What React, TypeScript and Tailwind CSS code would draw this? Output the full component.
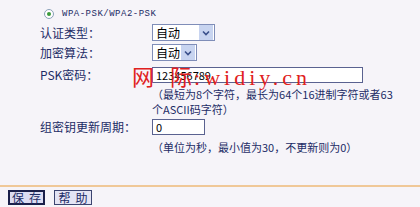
import React from 'react';

const font = { fontFamily: '"Noto Sans CJK SC", "Noto Sans", sans-serif' };

const Arrow = () => (
  <span className="flex h-[15px] w-[14px] items-center justify-center bg-[#c8d4f0]">
    <svg width="8" height="6" viewBox="0 0 8 6">
      <path d="M1 1.5 L4 4.5 L7 1.5" stroke="#3a4f8a" strokeWidth="1.6" fill="none" />
    </svg>
  </span>
);

const Select = ({ width }: { width: string }) => (
  <div className={`flex h-[17px] ${width} items-center justify-between border border-[#7f8db8] bg-white pl-[3px] pr-px`}>
    <span className="text-[12px] leading-none text-black">自动</span>
    <Arrow />
  </div>
);

const App = () => {
  return (
    <div className="relative h-[207px] w-[420px] overflow-hidden bg-[#f6f4f9] text-[#1d2c66]" style={font}>
      <div className="h-[185px] pl-[40px] pt-[9px]">
        {/* radio */}
        <div className="flex h-[10px] items-center gap-[8px] pl-[4px]">
          <span className="flex h-[10px] w-[10px] items-center justify-center rounded-full border border-[#8aa0b8] bg-white">
            <span className="h-[4px] w-[4px] rounded-full bg-[#3c9a3c]" />
          </span>
          <span className="text-[9px] leading-none tracking-[0.5px] text-[#1d2c66]" style={{ fontFamily: '"Liberation Mono", monospace' }}>
            WPA-PSK/WPA2-PSK
          </span>
        </div>

        <div className="mt-[5px] grid grid-cols-[112px_1fr] items-center gap-y-[3px] text-[12px] leading-[17px]">
          <span>认证类型：</span>
          <Select width="w-[63px]" />
          <span>加密算法：</span>
          <Select width="w-[45px]" />
        </div>

        <div className="mt-[6px] grid grid-cols-[112px_1fr] text-[12px]">
          <span className="h-[16px] leading-[16px]">PSK密码：</span>
          <div>
            <div className="flex h-[16px] w-[211px] items-center border border-[#5a6290] bg-white px-[3px] text-[11px] leading-none text-black">
              123456789
            </div>
            <div className="mt-[4px] h-[30px] text-[11px] leading-[15px]">
              （最短为8个字符，最长为64个16进制字符或者63
              <br />
              个ASCII码字符）
            </div>
          </div>
          <span className="mt-[2px] h-[16px] leading-[16px]">组密钥更新周期：</span>
          <div className="mt-[2px]">
            <div className="flex h-[16px] w-[53px] items-center border border-[#5a6290] bg-white px-[3px] text-[11px] leading-none text-black">
              0
            </div>
            <div className="mt-[5px] h-[15px] text-[11px] leading-[15px]">（单位为秒，最小值为30，不更新则为0）</div>
          </div>
        </div>
      </div>

      <div className="h-[2px] w-full bg-[#f0c898]" />

      <div className="mt-[3px] flex gap-[9px] pl-[8px]">
        <button className="flex h-[15px] w-[37px] items-center justify-center gap-[5px] border-2 border-[#1a1f4a] bg-[#dcdcf2] text-[12px] leading-none text-[#1d2c66]">
          <span>保</span>
          <span>存</span>
        </button>
        <button className="flex h-[15px] w-[38px] items-center justify-center gap-[5px] border border-[#3c4470] bg-[#e4e4f4] text-[12px] leading-none text-[#1d2c66]">
          <span>帮</span>
          <span>助</span>
        </button>
      </div>

      {/* watermark */}
      <div
        className="pointer-events-none absolute left-[132px] top-[67px] flex items-baseline text-[22px] leading-none text-[#e02020]"
        style={{ fontFamily: '"Liberation Serif", "Noto Sans CJK SC", serif' }}
      >
        <span>网</span>
        <span className="ml-[16px]">际</span>
        <span className="ml-[2px]">:</span>
        <span className="ml-[4px] tracking-[4px]">widiy.cn</span>
      </div>
    </div>
  );
};

export default App;
